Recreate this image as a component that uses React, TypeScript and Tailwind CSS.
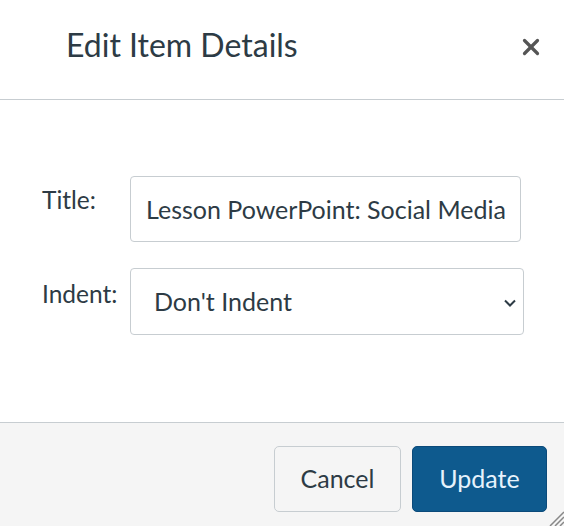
import { X } from 'lucide-react';

export default function App() {
  return (
    <div className="w-[564px] h-[526px] bg-white flex flex-col overflow-hidden text-[#2d3b45] font-['Lato','Noto_Sans',sans-serif]">
      <div className="h-[100px] shrink-0 flex items-start justify-between border-b border-[#c7cdd1] pl-[66px] pr-[20px]">
        <h1 className="mt-[24px] text-[32px] leading-[42px] font-normal text-[#2d3b45]">Edit Item Details</h1>
        <button className="mt-[34px] text-[#555]">
          <X className="h-[26px] w-[26px]" strokeWidth={3} />
        </button>
      </div>

      <div className="flex-1 flex flex-col gap-[26px] pt-[76px] pl-[42px]">
        <div className="flex items-start">
          <label className="w-[88px] pt-[8px] text-[24.5px] leading-[32px]">Title:</label>
          <input
            readOnly
            value="Lesson PowerPoint: Social Media"
            className="w-[391px] h-[66px] border border-[#c7cdd1] rounded-[4px] px-[15px] text-[25px] text-[#2d3b45] outline-none bg-white"
          />
        </div>
        <div className="flex items-start">
          <label className="w-[88px] pt-[10px] text-[24.5px] leading-[32px]">Indent:</label>
          <div className="w-[394px] h-[67px] border border-[#c7cdd1] rounded-[4px] flex items-center justify-between pl-[23px] pr-[7px] bg-white">
            <span className="text-[25px]">Don't Indent</span>
            <svg width="12" height="8" viewBox="0 0 12 8" className="mt-[2px]">
              <path d="M1 1.5 L6 6.5 L11 1.5" fill="none" stroke="#2d3b45" strokeWidth="2" />
            </svg>
          </div>
        </div>
      </div>

      <div className="h-[104px] shrink-0 bg-[#f5f5f5] border-t border-[#c7cdd1] flex items-start justify-end gap-[11px] pt-[23px] pr-[17px] relative">
        <button className="w-[127px] h-[66px] rounded-[5px] border border-[#c7cdd1] bg-[#f5f5f5] text-[25px] text-[#2d3b45]">
          Cancel
        </button>
        <button className="w-[135px] h-[66px] rounded-[5px] border border-[#0b4a7a] bg-[#0e5a8e] text-[25px] text-[#e6f2fc]">
          Update
        </button>
        <svg className="absolute right-0 bottom-0" width="18" height="18" viewBox="0 0 18 18">
          <path d="M18 4 L4 18 M18 9 L9 18 M18 14 L14 18" stroke="#888" strokeWidth="1.5" />
        </svg>
      </div>
    </div>
  );
}
